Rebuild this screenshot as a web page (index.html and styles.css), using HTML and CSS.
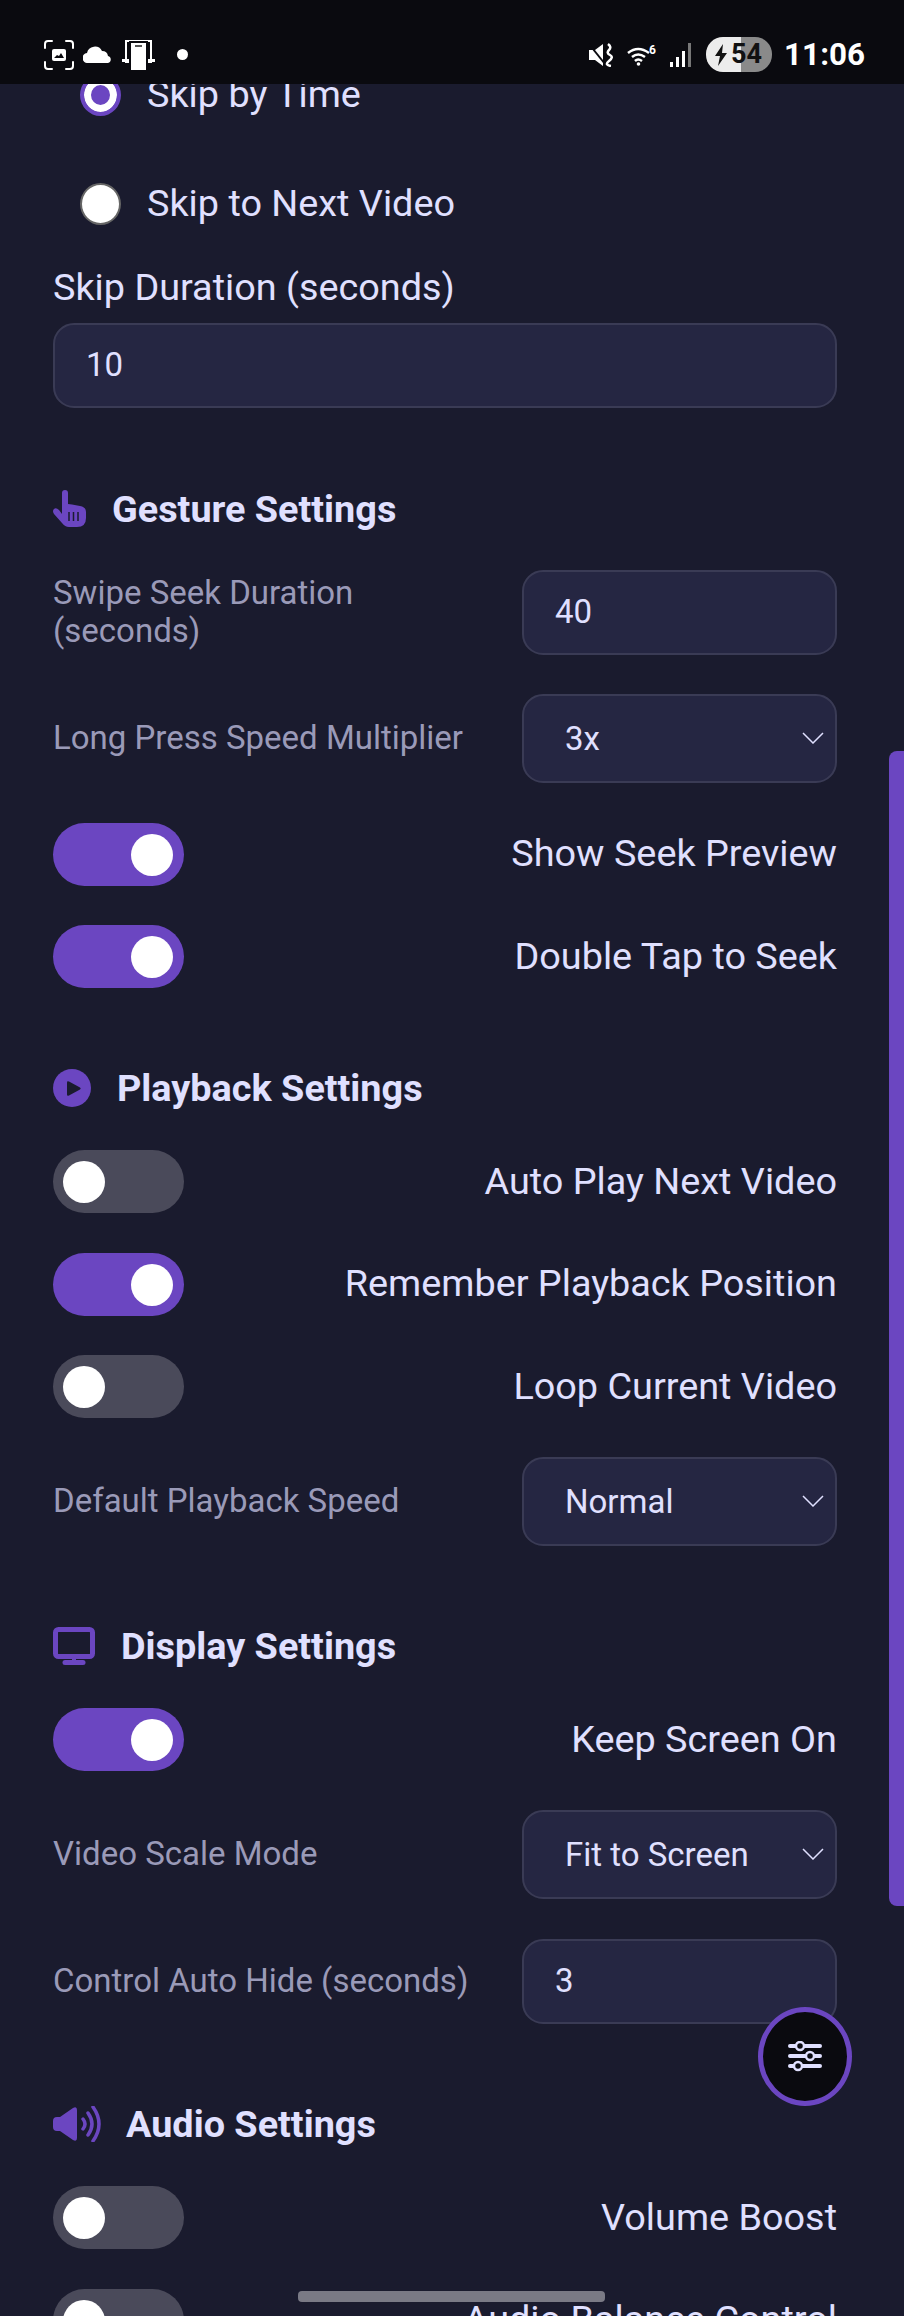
FILE: index.html
```html
<!DOCTYPE html>
<html lang="en">

<head>
  <meta charset="UTF-8">
  <meta name="viewport" content="width=device-width, initial-scale=1.0">
  <title>Settings</title>
  <link rel="stylesheet" href="styles.css">
</head>

<body>
  <!-- status bar sits on top of the scrolled page -->
  <div class="status-bar">
    <div class="status-left">
      <svg width="30" height="30" viewBox="0 0 30 30" fill="none" stroke="#fff" stroke-width="2" stroke-linecap="round">
        <path d="M1 8V4q0-3 3-3h4M22 1h4q3 0 3 3v4M29 22v4q0 3-3 3h-4M8 29H4q-3 0-3-3v-4" />
        <rect x="8" y="9" width="14" height="12" rx="2" fill="#fff" stroke="none" />
        <path d="M10 18l3-3 2 1 2-3 3 5z" fill="#0a0a0f" stroke="none" />
      </svg>
      <svg width="30" height="17" viewBox="0 0 30 17" fill="#fff">
        <path d="M5 17a5 5 0 0 1-1-10 8 8 0 0 1 15-2 6 6 0 0 1 6 5 3.600 3.600 0 0 1 0 7z" />
      </svg>
      <svg width="34" height="32" viewBox="0 0 34 32" fill="#fff">
        <path d="M3 1h27v23H3zM5 3v19h23V3z" />
        <rect x="0" y="20" width="33" height="3" />
        <rect x="8" y="3" width="17" height="29" stroke="#0a0a0f" stroke-width="2" />
        <rect x="13" y="6" width="7" height="2" fill="#555" />
      </svg>
      <span class="status-dot"></span>
    </div>
    <div class="status-right">
      <svg width="25" height="24" viewBox="0 0 25 24" fill="#fff">
        <path d="M0 7h6l8-6v22l-8-6H0z" />
        <path d="M0 1l16 20" stroke="#0a0a0f" stroke-width="2" />
        <path d="M19 1q4 3 1 6t1 5-1 6 2 5" fill="none" stroke="#fff" stroke-width="2.500" />
      </svg>
      <svg class="status-wifi" width="30" height="22" viewBox="0 0 30 22" fill="none" stroke="#fff" stroke-width="2.500">
        <path d="M1 9q10-8 21 0M5 13q6-5 13 0M8 17q3-3 7 0" />
        <circle cx="11.500" cy="20" r="1.800" fill="#fff" stroke="none" />
        <text x="22" y="10" class="wifi-num">6</text>
      </svg>
      <svg class="status-signal" width="22" height="24" viewBox="0 0 22 24" fill="#fff">
        <rect x="0" y="19" width="3" height="5" />
        <rect x="6" y="14" width="3" height="10" />
        <rect x="12" y="8" width="3" height="16" />
        <rect x="18" y="0" width="3" height="24" fill="#777" />
      </svg>
      <div class="battery">
        <svg width="14" height="22" viewBox="0 0 14 22" fill="#111">
          <path d="M9 0L1 12h5l-2 10 9-13H8z" />
        </svg>
        <span>54</span>
      </div>
      <span class="status-time">11:06</span>
    </div>
  </div>

  <div class="page">
    <div class="radio-row first">
      <span class="radio checked"></span>
      <span class="row-text">Skip by Time</span>
    </div>
    <div class="radio-row">
      <span class="radio"></span>
      <span class="row-text">Skip to Next Video</span>
    </div>
    <div class="field-label">Skip Duration (seconds)</div>
    <div class="input wide">10</div>

    <h2 class="section-title gesture">
      <svg width="34" height="38" viewBox="0 0 34 38" fill="#6b46c1">
        <path d="M9 3a3 3 0 0 1 6 0v11l4 .5 8 1.500q6 1 6 6v6q0 9-9 9h-8q-4 0-7-4L1 24q-2-3 0-5t5 1l3 4z" />
        <path d="M16 22v9M20.500 22v9M25 22v9" stroke="#1a1b2e" stroke-width="1.500" fill="none" />
      </svg>
      Gesture Settings
    </h2>
    <div class="form-row">
      <label class="row-label">Swipe Seek Duration<br>(seconds)</label>
      <div class="input">40</div>
    </div>
    <div class="form-row select-row">
      <label class="row-label">Long Press Speed Multiplier</label>
      <div class="select">3x
        <svg class="chevron" width="22" height="12" viewBox="0 0 22 12" fill="none" stroke="#e0e0ff" stroke-width="1.500">
          <path d="M1 1l10 10L21 1" />
        </svg>
      </div>
    </div>
    <div class="toggle-row">
      <span class="toggle on"></span>
      <span class="row-text">Show Seek Preview</span>
    </div>
    <div class="toggle-row">
      <span class="toggle on"></span>
      <span class="row-text">Double Tap to Seek</span>
    </div>

    <h2 class="section-title playback">
      <svg width="38" height="38" viewBox="0 0 38 38">
        <circle cx="19" cy="19" r="19" fill="#6b46c1" />
        <path d="M14 13.500q0-2 2-1l11 6q1.500 1 0 2l-11 6q-2 1-2-1z" fill="#1a1b2e" />
      </svg>
      Playback Settings
    </h2>
    <div class="toggle-row">
      <span class="toggle"></span>
      <span class="row-text">Auto Play Next Video</span>
    </div>
    <div class="toggle-row">
      <span class="toggle on"></span>
      <span class="row-text">Remember Playback Position</span>
    </div>
    <div class="toggle-row">
      <span class="toggle"></span>
      <span class="row-text">Loop Current Video</span>
    </div>
    <div class="form-row select-row">
      <label class="row-label">Default Playback Speed</label>
      <div class="select">Normal
        <svg class="chevron" width="22" height="12" viewBox="0 0 22 12" fill="none" stroke="#e0e0ff" stroke-width="1.500">
          <path d="M1 1l10 10L21 1" />
        </svg>
      </div>
    </div>

    <h2 class="section-title display">
      <svg width="42" height="38" viewBox="0 0 42 38" fill="none" stroke="#6b46c1">
        <rect x="2.500" y="2.500" width="37" height="27" rx="3" stroke-width="5" />
        <path d="M21 29v6" stroke-width="4" />
        <path d="M12 35.500h18" stroke-width="5" stroke-linecap="round" />
      </svg>
      Display Settings
    </h2>
    <div class="toggle-row">
      <span class="toggle on"></span>
      <span class="row-text">Keep Screen On</span>
    </div>
    <div class="form-row select-row">
      <label class="row-label">Video Scale Mode</label>
      <div class="select">Fit to Screen
        <svg class="chevron" width="22" height="12" viewBox="0 0 22 12" fill="none" stroke="#e0e0ff" stroke-width="1.500">
          <path d="M1 1l10 10L21 1" />
        </svg>
      </div>
    </div>
    <div class="form-row">
      <label class="row-label">Control Auto Hide (seconds)</label>
      <div class="input">3</div>
    </div>

    <h2 class="section-title audio">
      <svg width="48" height="36" viewBox="0 0 48 36" fill="#6b46c1">
        <path d="M7 11l13-9q4-2 4 2v28q0 4-4 2L7 25H4q-4 0-4-4v-6q0-4 4-4z" />
        <path d="M30 13q4 5 0 10M35 7q8 11 0 22M40 1q12 17 0 34" fill="none" stroke="#6b46c1" stroke-width="3.500" stroke-linecap="round" />
      </svg>
      Audio Settings
    </h2>
    <div class="toggle-row">
      <span class="toggle"></span>
      <span class="row-text">Volume Boost</span>
    </div>
    <div class="toggle-row">
      <span class="toggle"></span>
      <span class="row-text">Audio Balance Control</span>
    </div>
  </div>

  <div class="scroll-thumb"></div>

  <button class="fab" type="button" aria-label="Settings">
    <svg width="34" height="32" viewBox="0 0 34 32" fill="none" stroke="#e0e0ff" stroke-width="4" stroke-linecap="round">
      <path d="M2 5h30M2 15h30M2 25h30" />
      <g fill="#0a0a0f" stroke-width="2.500">
        <circle cx="12" cy="5" r="4" />
        <circle cx="22" cy="15" r="4" />
        <circle cx="10" cy="25" r="4" />
      </g>
    </svg>
  </button>

  <div class="home-bar"></div>
</body>

</html>
```
FILE: styles.css
```css
* {
  margin: 0;
  padding: 0;
  box-sizing: border-box;
}

html,
body {
  height: 2316px;
  overflow: hidden;
}

body {
  position: relative;
  background-color: #1a1b2e;
  color: #e0e0ff;
  font-family: Roboto, "Liberation Sans", sans-serif;
  font-size: 37.800px;
}

/* 状态栏 */
.status-bar {
  position: absolute;
  top: 0;
  left: 0;
  right: 0;
  height: 84px;
  padding: 37px 39px 0 44px;
  display: flex;
  justify-content: space-between;
  background-color: #0a0a0f;
  z-index: 5;
}

.status-left,
.status-right {
  display: flex;
  align-items: center;
  height: 35px;
}

.status-left {
  gap: 9px;
}

.status-dot {
  width: 11px;
  height: 11px;
  margin-left: 12px;
  border-radius: 50%;
  background-color: #fff;
}

.status-wifi {
  margin-left: 13px;
  overflow: visible;
}

.wifi-num {
  font-size: 12px;
  font-weight: 700;
  fill: #fff;
  stroke: none;
}

.status-signal {
  margin-left: 13px;
}

.battery {
  width: 66px;
  height: 35px;
  margin-left: 14px;
  padding-left: 8px;
  display: flex;
  align-items: center;
  gap: 3px;
  border-radius: 17px;
  background: linear-gradient(90deg, #ececec 53%, #8a8a8a 53%);
  color: #111;
  font-size: 27px;
  font-weight: 700;
  line-height: 1;
}

.status-time {
  margin-left: 12px;
  color: #fff;
  font-size: 31.400px;
  font-weight: 700;
  line-height: 1;
}

/* 页面内容 */
.page {
  padding: 0 67px 0 53px;
}

.row-text {
  padding-bottom: 2px;
}

.radio-row {
  display: flex;
  align-items: center;
  gap: 26px;
  height: 42px;
  margin-top: 67px;
  padding-left: 27px;
  line-height: 42px;
}

.radio-row.first {
  margin-top: 74px;
}

.radio {
  width: 41px;
  height: 42px;
  border-radius: 50%;
  border: 2px solid #666;
  background-color: #fff;
}

.radio.checked {
  border: 4px solid #6b46c1;
  background-color: #6b46c1;
  box-shadow: inset 0 0 0 7px #fff;
}

.field-label {
  margin-top: 41px;
  line-height: 42px;
}

.input,
.select {
  position: relative;
  flex: none;
  width: 315px;
  height: 85px;
  padding-left: 31px;
  background-color: #252642;
  border: 2px solid #3a3b55;
  border-radius: 21px;
  font-size: 33px;
  line-height: 79px;
}

.input.wide {
  width: 100%;
  margin-top: 15px;
}

.select {
  height: 89px;
  padding-left: 41px;
  line-height: 85px;
}

.chevron {
  position: absolute;
  right: 11px;
  top: 36px;
}

.section-title {
  display: flex;
  align-items: center;
  gap: 26px;
  height: 42px;
  font-size: 37.800px;
  font-weight: 700;
}

.section-title.gesture {
  margin-top: 80px;
  gap: 25px;
}

.section-title.playback {
  margin-top: 79px;
}

.section-title.display {
  margin-top: 79px;
}

.section-title.audio {
  margin-top: 79px;
  gap: 25px;
}

.form-row {
  display: flex;
  align-items: center;
  justify-content: space-between;
  margin-top: 40px;
  font-size: 33px;
}

.select-row {
  margin-top: 39px;
}

.row-label {
  padding-bottom: 2px;
  color: #9a9ab8;
  line-height: 38px;
}

.toggle-row {
  display: flex;
  align-items: center;
  justify-content: space-between;
  height: 63px;
  margin-top: 39.500px;
}

.section-title + .toggle-row {
  margin-top: 41px;
}

.toggle {
  position: relative;
  width: 131px;
  height: 63px;
  border-radius: 32px;
  background-color: #4a4a5a;
}

.toggle::before {
  content: "";
  position: absolute;
  top: 11px;
  left: 10px;
  width: 42px;
  height: 42px;
  border-radius: 50%;
  background-color: #fff;
}

.toggle.on {
  background-color: #6b46c1;
}

.toggle.on::before {
  left: 78px;
}

/* 滚动条 */
.scroll-thumb {
  position: absolute;
  top: 751px;
  right: 0;
  width: 15px;
  height: 1155px;
  border-radius: 8px 0 0 8px;
  background-color: #6b46c1;
}

.fab {
  position: absolute;
  left: 758px;
  top: 2007px;
  width: 94px;
  height: 99px;
  display: flex;
  align-items: center;
  justify-content: center;
  border: 5px solid #6b46c1;
  border-radius: 50%;
  background-color: #0a0a0f;
}

.home-bar {
  position: absolute;
  left: 298px;
  top: 2291px;
  width: 307px;
  height: 11px;
  border-radius: 4px;
  background-color: #7a7a85;
}
```
